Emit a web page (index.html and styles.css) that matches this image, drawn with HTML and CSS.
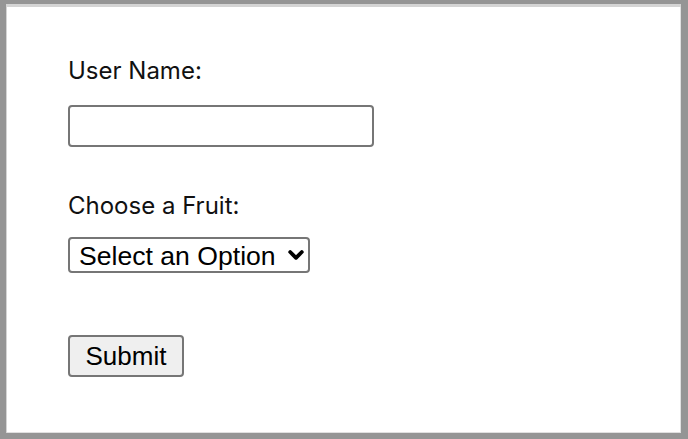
FILE: index.html
```html
<!DOCTYPE html>
<html>
<head>
<meta charset="utf-8">
<link rel="stylesheet" href="styles.css">
</head>
<body>
<div class="frame">
  <form class="form">
    <label class="label label-first" for="user">User Name:</label>
    <input class="text-input" id="user" type="text">
    <label class="label label-second" for="fruit">Choose a Fruit:</label>
    <div class="select-wrap">
      <select class="select" id="fruit">
        <option>Select an Option</option>
      </select>
      <svg class="chevron" width="16" height="12" viewBox="0 0 16 12"><path d="M2.2 3 L8 8.8 L13.8 3" fill="none" stroke="#000" stroke-width="3.8" stroke-linecap="round" stroke-linejoin="round"/></svg>
    </div>
    <button class="button" type="button">Submit</button>
  </form>
</div>
</body>
</html>
```

FILE: styles.css
```css
html, body {
  margin: 0;
  padding: 0;
  background: #9a9a9a;
}
.frame {
  box-sizing: border-box;
  width: 688px;
  height: 439px;
  border-style: solid;
  border-color: #959595;
  border-width: 4px 7px 6px 6px;
  background: #fff;
  box-shadow: inset 1px 3px 0 #d4d4d4, inset -1px -1px 0 #e0e0e0;
}
.form {
  display: flex;
  flex-direction: column;
  align-items: flex-start;
  padding: 53px 0 0 62px;
}
.label {
  font-family: Inter, "Liberation Sans", sans-serif;
  font-size: 24px;
  line-height: 28px;
  color: #111;
}
.label-second {
  margin-top: 45px;
}
.text-input {
  box-sizing: border-box;
  margin: 20px 0 0 0;
  width: 306px;
  height: 42px;
  border: 2px solid #767676;
  border-radius: 4px;
  background: #fff;
  padding: 0;
}
.select-wrap {
  position: relative;
  margin-top: 17px;
}
.select {
  -webkit-appearance: none;
  appearance: none;
  box-sizing: border-box;
  width: 242px;
  height: 36px;
  margin: 0;
  border: 2px solid #767676;
  border-radius: 4px;
  background: #fff;
  color: #000;
  font-family: "Liberation Sans", Arial, sans-serif;
  font-size: 26.6px;
  line-height: 32px;
  padding: 1px 0 0 9px;
}
.chevron {
  position: absolute;
  left: 220px;
  top: 12px;
  pointer-events: none;
}
.button {
  box-sizing: border-box;
  margin-top: 62px;
  width: 116px;
  height: 42px;
  border: 2px solid #767676;
  border-radius: 4px;
  background: #efefef;
  color: #000;
  font-family: "Liberation Sans", Arial, sans-serif;
  font-size: 26px;
  padding: 0;
}
```
